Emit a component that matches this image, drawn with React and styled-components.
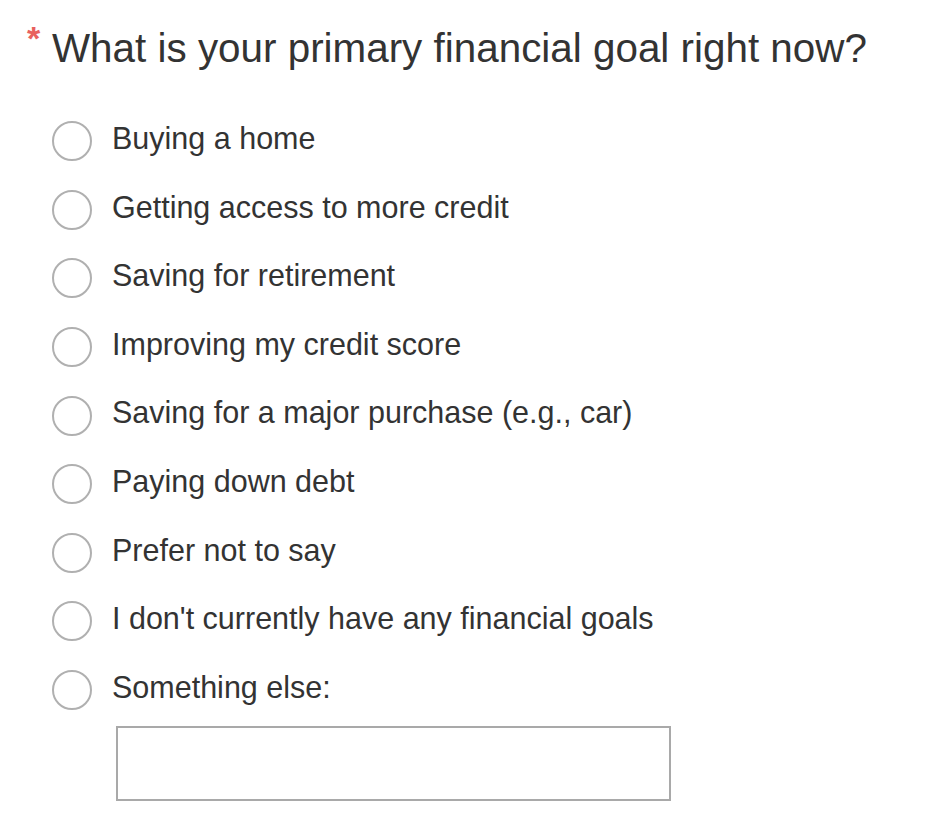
import styled, { createGlobalStyle } from "styled-components";

const GlobalStyle = createGlobalStyle`
  body {
    margin: 0;
    background: #ffffff;
    font-family: "Liberation Sans", Arial, sans-serif;
    color: #333333;
  }
`;

const options = [
  "Buying a home",
  "Getting access to more credit",
  "Saving for retirement",
  "Improving my credit score",
  "Saving for a major purchase (e.g., car)",
  "Paying down debt",
  "Prefer not to say",
  "I don't currently have any financial goals",
  "Something else:",
];

export default function App() {
  return (
    <>
      <GlobalStyle />
      <Container>
        <TitleRow>
          <Required>*</Required>
          <Title>What is your primary financial goal right now?</Title>
        </TitleRow>
        <OptionList>
          {options.map((label, index) => (
            <OptionRow key={index}>
              <Radio type="radio" name="goal" />
              <OptionLabel>{label}</OptionLabel>
            </OptionRow>
          ))}
        </OptionList>
        <OtherInput type="text" />
      </Container>
    </>
  );
}

const Container = styled.div`
  display: flex;
  flex-direction: column;
  padding: 22px 0 0 27px;
`;

const TitleRow = styled.div`
  display: flex;
  align-items: flex-start;
`;

const Required = styled.span`
  color: #e8605e;
  font-size: 34px;
  font-weight: 700;
  line-height: 1;
  width: 25px;
  margin-top: -1px;
`;

const Title = styled.h1`
  margin: 0;
  font-family: "Liberation Sans", Arial, sans-serif;
  font-size: 40.4px;
  font-weight: 400;
  line-height: 52px;
  color: #333333;
`;

const OptionList = styled.div`
  display: flex;
  flex-direction: column;
  margin-top: 33px;
  padding-left: 25px;
`;

const OptionRow = styled.label`
  display: flex;
  align-items: center;
  height: 68.6px;
  gap: 20px;
  cursor: pointer;
`;

const Radio = styled.input`
  appearance: none;
  margin: 0;
  width: 40px;
  height: 40px;
  border: 2px solid #b0b0b0;
  border-radius: 50%;
  background: #ffffff;
  box-sizing: border-box;
  flex-shrink: 0;
`;

const OptionLabel = styled.span`
  font-size: 30.5px;
  line-height: 1;
  margin-bottom: 6px;
  color: #333333;
`;

const OtherInput = styled.input`
  margin: 2px 0 0 89px;
  width: 555px;
  height: 75px;
  box-sizing: border-box;
  border: 2px solid #a9a9a9;
  background: #ffffff;
  outline: none;
`;
